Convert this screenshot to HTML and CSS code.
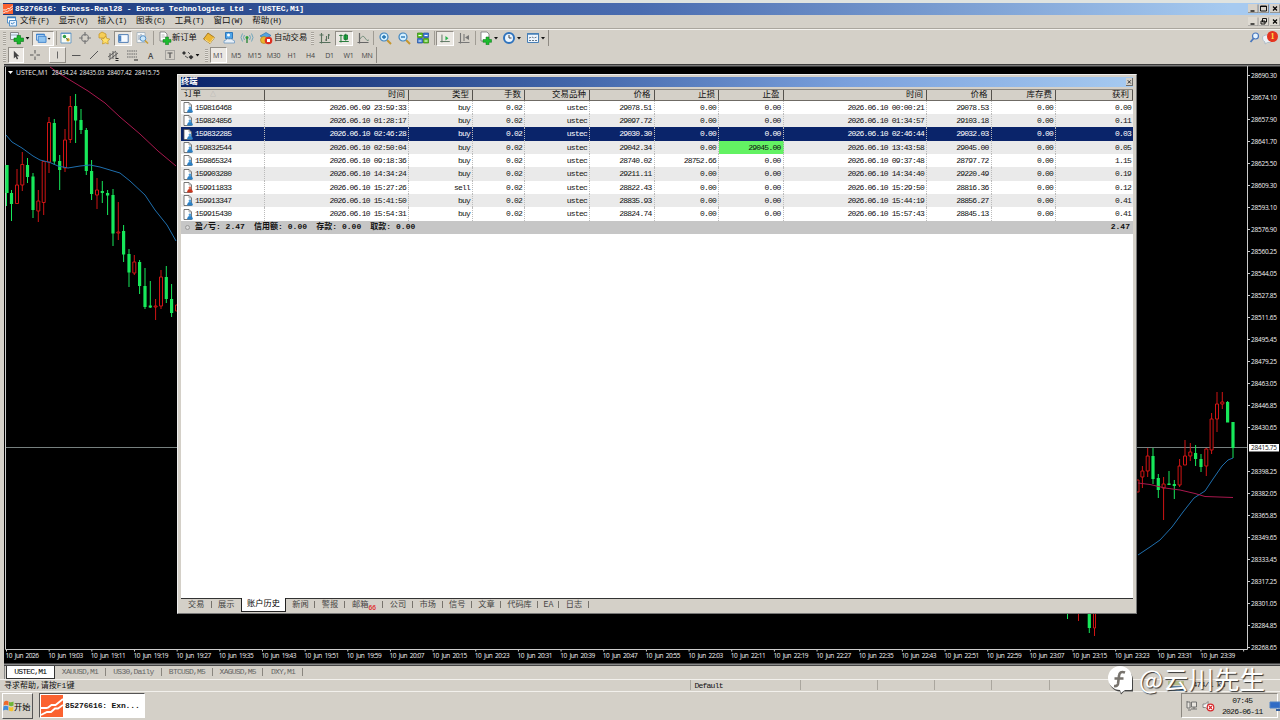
FILE: index.html
```html
<!DOCTYPE html>
<html lang="zh-CN">
<head>
<meta charset="utf-8">
<title>85276616: Exness-Real28</title>
<link rel="stylesheet" href="styles.css">
</head>
<body>
<svg class="defs" width="0" height="0">
  <defs>
    <symbol id="doc" viewBox="0 0 10 11"><path d="M1 .5h5l2.500 2.500v7.500H1z" fill="#fff" stroke="#555" stroke-width=".8"/><path d="M6 .5V3h2.500" fill="none" stroke="#777" stroke-width=".6"/></symbol>
    <symbol id="buy" viewBox="0 0 10 11"><use href="#doc"/><circle cx="7" cy="5.800" r="1.400" fill="#4b9bd8"/><path d="M4.300 10.600V9.200Q4.400 7 7 7t2.700 2.200v1.400z" fill="#2a7fc4"/></symbol>
    <symbol id="sell" viewBox="0 0 10 11"><use href="#doc"/><circle cx="7" cy="5.800" r="1.400" fill="#e0664a"/><path d="M4.300 10.600V9.200Q4.400 7 7 7t2.700 2.200v1.400z" fill="#c8341c"/></symbol>
    <symbol id="logo" viewBox="0 0 22 22"><path d="M0 0h22v22H0z" fill="#fb6230"/><path d="M0 13h5.500q1.500 0 3-1.500l2-1.500h4l7.500-6M0 20l6-3h4l4-3.500h3l5-3.500" fill="none" stroke="#fff" stroke-width="1.800"/></symbol>
    <symbol id="dd" viewBox="0 0 4 3"><path d="M0 0h4L2 2.500z" fill="#111"/></symbol>
  </defs>
</svg>
<div class="screen">
  <header class="titlebar">
    <svg width="10" height="10"><use href="#logo"/></svg>
    <span class="titletext">85276616: Exness-Real28 - Exness Technologies Ltd - [USTEC,M1]</span>
    <span class="winbtns"><svg width="32" height="9" viewBox="0 0 32 9"><path d="M0 0h10v9H0zM10.500 0h10v9h-10zM22 0h10v9H22z" fill="#d6d2ca"/><path d="M0 8.700h10V.5M10.500 8.700h10V.5M22 8.700h9.700V.5" fill="none" stroke="#555" stroke-width=".6"/><path d="M2.500 7h4" stroke="#000" stroke-width="1.300"/><path d="M12.500 2h6v5h-6zM12.500 2.500h6" fill="none" stroke="#000" stroke-width=".9"/><path d="M25 2.500l4 4m0-4l-4 4" stroke="#000" stroke-width="1.200"/></svg></span>
  </header>
  <nav class="menubar">
    <svg width="11" height="11" viewBox="0 0 11 11"><path d="M1.500 1h8v6h-8z" fill="#fff" stroke="#5591c8"/><path d="M1 1.500h9" stroke="#3a7fc0" stroke-width="1.500"/><path d="M3.500 4.500h7V10h-7z" fill="#e9f4ff" stroke="#5591c8"/><path d="M5 7l1.500 1 2-2" stroke="#3a7fc0" fill="none"/></svg>
    <span>文件<i>(F)</i></span><span>显示<i>(V)</i></span><span>插入<i>(I)</i></span><span>图表<i>(C)</i></span><span>工具<i>(T)</i></span><span>窗口<i>(W)</i></span><span>帮助<i>(H)</i></span>
    <span class="winbtns"><svg width="32" height="9" viewBox="0 0 32 9"><path d="M0 0h10v9H0zM10.500 0h10v9h-10zM22 0h10v9H22z" fill="#dedad2"/><path d="M0 8.700h10V.5M10.500 8.700h10V.5M22 8.700h9.700V.5" fill="none" stroke="#777" stroke-width=".6"/><path d="M2.500 7h4" stroke="#000" stroke-width="1.300"/><path d="M14.500 1.500h4v3.500h-4zM13 4h4v3h-4z" fill="#dedad2" stroke="#000" stroke-width=".9"/><path d="M25 2.500l4 4m0-4l-4 4" stroke="#000" stroke-width="1.200"/></svg></span>
  </nav>
  <div class="toolbar tb1">
    <b class="grip"></b>
    <svg width="21" height="14" viewBox="0 0 21 14"><path d="M1.500 1.500h8v7h-8z" fill="#e7f4ff" stroke="#888"/><path d="M2 4h7" stroke="#9ab"/><path d="M5 7h3V4.500h3.500V7h3v3.500h-3V13H8v-2.500H5z" fill="#19b52c" stroke="#08751a" stroke-width=".6"/><use href="#dd" x="16.500" y="6" width="4" height="3"/></svg>
    <svg class="pressed" width="22" height="15" viewBox="0 0 22 15"><path d="M3.500 2.500h9v7h-9z" fill="#d5ebff" stroke="#3c7fc8"/><path d="M5.500 5h9v7h-9z" fill="#8fc3f0" stroke="#3c7fc8"/><path d="M3 3h10" stroke="#3d84d0" stroke-width="1.500"/><use href="#dd" x="16" y="6.500" width="4" height="3"/></svg>
    <b class="sep"></b>
    <svg width="14" height="14" viewBox="0 0 14 14"><path d="M2 2h10v10H2z" fill="#f8fcf4" stroke="#6c9bc4"/><path d="M2 2.500h10" stroke="#69c"/><circle cx="5.500" cy="5.500" r="1.700" fill="#2ba33d"/><circle cx="9" cy="8.800" r="1.700" fill="#d5a22c"/><path d="M5 5l4 4" stroke="#486"/></svg>
    <svg width="14" height="14" viewBox="0 0 14 14"><circle cx="7" cy="7" r="3.600" fill="none" stroke="#888" stroke-width="1.200"/><path d="M7 1v4m0 4v4M1 7h4m4 0h4" stroke="#777" stroke-width="1.200"/></svg>
    <svg width="14" height="14" viewBox="0 0 14 14"><path d="M2 3l3-2 4 2v4H2z" fill="#f6ce58" stroke="#c09020" stroke-width=".7"/><path d="M8.500 5l1.300 2.500 3 .5-2 2 .4 3-2.700-1.200L5.500 13l.5-3-2-2 3-.5z" fill="#ffe06a" stroke="#c3931e" stroke-width=".7"/></svg>
    <svg class="pressed" width="18" height="15" viewBox="0 0 18 15"><path d="M4 3h11v9H4z" fill="#f6faff" stroke="#3b6eab"/><path d="M4 4h3v7H4z" fill="#4d86c6"/></svg>
    <svg width="14" height="14" viewBox="0 0 14 14"><path d="M2 1.500h8v10H2z" fill="#f4f7f9" stroke="#9aa9b6" stroke-width=".7"/><path d="M4 4v5M6 3v5" stroke="#89a"/><circle cx="8" cy="7.500" r="2.800" fill="#cbe7fa" stroke="#5591c8"/><path d="M10 9.500l3 3" stroke="#c89b35" stroke-width="1.600"/></svg>
    <b class="sep"></b>
    <span class="txtbtn"><svg width="14" height="14" viewBox="0 0 14 14"><path d="M2 1h5l2 2v7H2z" fill="#fff" stroke="#777" stroke-width=".8"/><path d="M3.500 4h3M3.500 6h4" stroke="#999" stroke-width=".7"/><path d="M5 8.500h2.500V6h3v2.500H13v2.800h-2.500v2.500h-3v-2.500H5z" fill="#1dbb2e" stroke="#08751a" stroke-width=".5"/></svg>新订单</span>
    <svg width="14" height="14" viewBox="0 0 14 14"><path d="M1.500 8L6 2l6.500 4.500L8 12.500z" fill="#ecb634" stroke="#98680c" stroke-width=".8"/><path d="M3 8.500l5 3.500 4-5.500" fill="none" stroke="#fff0b0" stroke-width=".8"/></svg>
    <svg width="14" height="14" viewBox="0 0 14 14"><path d="M3.500 1.500h7v6h-7z" fill="#4da4e8" stroke="#2d78bd"/><circle cx="6.500" cy="4" r="1.500" fill="#fff"/><path d="M2 12q-1-3 2-3 1-2 3.500-1 2-1 3 1 3 0 2 3z" fill="#e8f0f8" stroke="#6d98c0" stroke-width=".8"/></svg>
    <svg width="14" height="14" viewBox="0 0 14 14"><circle cx="7" cy="6.500" r="1.500" fill="#2a9d39"/><path d="M7 7v5" stroke="#3a8d45" stroke-width="1.500"/><path d="M4.500 9q-2-2.500 0-5m5 5q2-2.500 0-5M2.500 10.500q-3-4 0-8m9 8q3-4 0-8" fill="none" stroke="#6fa6bc" stroke-width="1"/></svg>
    <span class="txtbtn"><svg width="16" height="14" viewBox="0 0 16 14"><path d="M2 5l6-3.500 5 3L8 8z" fill="#54a4df" stroke="#236da8" stroke-width=".6"/><circle cx="6" cy="9" r="3.500" fill="#e9b630" stroke="#aa7a13" stroke-width=".6"/><circle cx="10.500" cy="9.500" r="3.800" fill="#dd2f20"/><path d="M9 8h3v3H9z" fill="#fff"/></svg>自动交易</span>
    <b class="grip g2"></b>
    <svg width="14" height="14" viewBox="0 0 14 14"><path d="M3.500 2v10.500M1.500 11.500h11M1.500 4h4M8.500 5v5M10.500 3v5M7 9h2m1-5h2" fill="none" stroke="#56705c" stroke-width="1.100"/></svg>
    <svg class="pressed" width="18" height="15" viewBox="0 0 18 15"><path d="M5.500 3v9M3.500 11h11M3.500 4h4" stroke="#2b7d3e" stroke-width="1.200"/><path d="M9 3.500h4v5H9z" fill="#23bf4a" stroke="#116d28"/><path d="M11 2v8" stroke="#116d28"/></svg>
    <svg width="14" height="14" viewBox="0 0 14 14"><path d="M3.500 2v10.500M1.500 11.500h11" stroke="#666" stroke-width="1.200"/><path d="M4 8q3-5 5-1t4 2" fill="none" stroke="#789180"/></svg>
    <b class="sep"></b>
    <svg width="14" height="14" viewBox="0 0 14 14"><path d="M9 9l4 4" stroke="#c6962d" stroke-width="2"/><circle cx="6" cy="6" r="4" fill="#d3efff" stroke="#3f83bd" stroke-width="1.200"/><path d="M4 6h4M6 4v4" stroke="#1e70b0" stroke-width="1.300"/></svg>
    <svg width="14" height="14" viewBox="0 0 14 14"><path d="M9 9l4 4" stroke="#c6962d" stroke-width="2"/><circle cx="6" cy="6" r="4" fill="#d3efff" stroke="#3f83bd" stroke-width="1.200"/><path d="M4 6h4" stroke="#1e70b0" stroke-width="1.300"/></svg>
    <svg width="14" height="14" viewBox="0 0 14 14"><path d="M1.500 2h5v4.500h-5zM7.500 7.500h5V12h-5z" fill="#59c526" stroke="#358212" stroke-width=".7"/><path d="M7.500 2h5v4.500h-5zM1.500 7.500h5V12h-5z" fill="#407ed5" stroke="#234e9c" stroke-width=".7"/><path d="M2.500 4.500h3m3 0h3m-9 5.500h3m3 0h3" stroke="#fff" stroke-width="1.200"/></svg>
    <b class="sep"></b>
    <svg class="pressed" width="18" height="15" viewBox="0 0 18 15"><path d="M5.500 3v9M3.500 11h11" stroke="#5a7560" stroke-width="1.100"/><path d="M9.500 4.500l3.500 2.700-3.500 2.700z" fill="#28b34c"/></svg>
    <svg width="14" height="14" viewBox="0 0 14 14"><path d="M3.500 2v10.500M1.500 11.500h11M7 3v7" stroke="#777" stroke-width="1.100"/><path d="M8 6.500L12 4v5z" fill="#777"/></svg>
    <b class="sep"></b>
    <svg width="21" height="14" viewBox="0 0 21 14"><path d="M3 1h6l2 2v7H3z" fill="#fff" stroke="#777" stroke-width=".8"/><path d="M5 8.500h3V6h3v2.500h2.500v2.800H11v2.500H8v-2.500H5z" fill="#1dbb2e" stroke="#08751a" stroke-width=".5"/><use href="#dd" x="16" y="6" width="4" height="3"/></svg>
    <svg width="21" height="14" viewBox="0 0 21 14"><circle cx="8" cy="7" r="5" fill="#eaf5ff" stroke="#2f73bd" stroke-width="2"/><path d="M8 4v3h2.500" fill="none" stroke="#444"/><use href="#dd" x="16" y="6" width="4" height="3"/></svg>
    <svg width="21" height="14" viewBox="0 0 21 14"><path d="M2.500 2.500h11v9h-11z" fill="#eef6ff" stroke="#477fb6"/><path d="M2 3h12" stroke="#477fb6" stroke-width="1.500"/><path d="M4 7l3-1 2 1 3-1M4 9.500h8" fill="none" stroke="#678" stroke-dasharray="2 1"/><use href="#dd" x="16" y="6" width="4" height="3"/></svg>
    <i class="edge"></i>
    <svg width="12" height="14" viewBox="0 0 12 14"><circle cx="6.500" cy="5" r="3" fill="#e5f3ff" stroke="#4977bd" stroke-width="1.200"/><path d="M4.500 7.500L1.500 11" stroke="#4977bd" stroke-width="1.800"/></svg>
    <svg width="18" height="16" viewBox="0 0 18 16"><path d="M.5 8q0-3 5-3t5 4-5 3.500L3 14V12Q.5 11 .5 8z" fill="#eef2f6" stroke="#a6b5c2" stroke-width=".8"/><circle cx="10.500" cy="6.500" r="5.500" fill="#e43420"/><text x="8.600" y="9.300" class="badge">1</text></svg>
  </div>
  <div class="toolbar tb2">
    <b class="grip"></b>
    <svg class="pressed" width="16" height="16" viewBox="0 0 16 16"><path d="M5.500 3v9l2-2 1.500 3 1.500-.7-1.400-3h2.700z" fill="#444"/></svg>
    <svg width="14" height="14" viewBox="0 0 14 14"><path d="M7 2v3.500M7 8.500V12M2 7h3.500M8.500 7H12" stroke="#555"/></svg>
    <b></b>
    <svg class="pressed raised" width="17" height="16" viewBox="0 0 17 16"><path d="M8.500 4v8" stroke="#555"/></svg>
    <svg width="14" height="14" viewBox="0 0 14 14"><path d="M3 7.500h8.500" stroke="#555"/></svg>
    <svg width="14" height="14" viewBox="0 0 14 14"><path d="M3 11l8-8" stroke="#555"/></svg>
    <svg width="14" height="14" viewBox="0 0 14 14"><path d="M2 9l8-6M3 12l9-7M4 5v6M7 3v8M10 4v6" stroke="#555" stroke-width=".9"/><path d="M9.500 10.500h3M9.500 12.500h3" stroke="#222"/></svg>
    <svg width="14" height="14" viewBox="0 0 14 14"><path d="M2 3h10M2 6h10M2 9h10" stroke="#666" stroke-dasharray="1.500 .7"/><path d="M9 12h4" stroke="#222"/></svg>
    <span class="lat big">A</span>
    <svg width="14" height="14" viewBox="0 0 14 14"><path d="M2.500 2.500h9v9h-9z" fill="none" stroke="#777" stroke-dasharray="1 1"/><path d="M4.500 5h5M7 5v5" stroke="#555" stroke-width="1.200"/></svg>
    <svg width="22" height="14" viewBox="0 0 22 14"><path d="M4 3l2 2-2 2-2-2zM11 7l2.500 2-2.500 2.500L8.500 9z" fill="#333"/><path d="M5 8l3 2M8 4l2 2" stroke="#555"/><use href="#dd" x="15.500" y="6" width="4" height="3"/></svg>
    <b class="grip"></b>
    <span class="lat pressed">M1</span><span class="lat">M5</span><span class="lat">M15</span><span class="lat">M30</span><span class="lat">H1</span><span class="lat">H4</span><span class="lat">D1</span><span class="lat">W1</span><span class="lat">MN</span><i class="edge"></i>
  </div>

  <main class="chart">
    <svg class="plot" width="1280" height="602" viewBox="0 64 1280 602">
      <path d="M4 64h1276v602H4z" fill="#000"/>
      <path d="M4 65.500h1276" stroke="#777" stroke-width="2"/>
      <path d="M5.500 67V649.500H1247.500V66" fill="none" stroke="#ccc"/>
      <path d="M4 664.500h1276" stroke="#888" stroke-width="2"/>
      <path d="M6 447.500h1241" stroke="#77807f"/>
      <path d="M8 71h5l-2.500 3z" fill="#fff"/>
      <g fill="none" stroke="#17e85a" stroke-width="1">
        <path d="M6.500 165v41M11.500 190v31M27.500 158v25M33 173v45M54.300 119v46M59.700 155v35M75.600 94v49M81 109v25M86.300 128v47M91.600 160v40M102.300 181v22M107.600 190v25M113 189v57M123.600 225v37M129 249v38M139.600 260v34M145 268v41M150.300 281v27M166.300 266v37M171.600 284v33"/>
        <path d="M1153 448v36M1158.300 474v24M1169 471v14M1174.300 480v19M1195.600 445v21M1201 454v18M1227.600 401v21M1233 422v36M1067.500 613v6M1089.300 613v20"/>
        <path stroke-width="3.200" d="M7 165v28M11.500 193v11M27.500 165v12M33 176.500v33.500M54.300 123v38.500M59.700 161v9M75.600 106v14.500M81 120v10M86.300 130v41M91.600 171v23M102.300 191v2M107.600 193v2.500M113 195v38.500M123.600 231v23.500M129 254v18.500M139.600 262v24M145 286v21M150.300 305.500v2M166.300 277v22M171.600 299v14M1153 456v23M1158.300 478v12M1169 483.500v1.500M1174.300 484v2M1195.600 453v6M1201 459v8M1227.600 402v20.500M1233 422v26M1089.300 613v15"/>
      </g>
      <g fill="#000" stroke="#d01414" stroke-width="1">
        <path d="M17 169v35M22.300 152v39M38.300 190v32M43.700 161v54M49 117v56M65 129v43M70.300 96v47M97 178v31M118.300 202v38M134.300 255v20M155.600 299v21M161 270v39M1142.400 466v22M1147.700 448v29M1163.600 477v43M1179.600 459v28M1185 440v25M1190.300 443v18M1206.300 448v28M1211.600 413v41M1217 392v40M1222.300 392v17M1078.500 613v8M1094.500 613v23"/>
        <path d="M15.500 185h3v18.500h-3zM20.800 164.500h3V185h-3zM36.800 201h3v10h-3zM42.200 161.500h3v41h-3zM47.500 122.500h3V162h-3zM63.500 140h3v28h-3zM68.800 106.500h3v33h-3zM95.500 190h3v5h-3zM116.800 232h3v1h-3zM132.800 262h3v11h-3zM154.100 306h3v1h-3zM159.500 277h3v29h-3zM175.500 305h3v6h-3zM1136 480h3v12h-3zM1140.900 471h3v6h-3zM1146.200 456h3v15h-3zM1162.100 484h3v4h-3zM1178.100 466h3v19h-3zM1183.500 456h3v9h-3zM1188.800 452h3v4h-3zM1204.800 449h3v17h-3zM1210.100 419h3v31h-3zM1215.500 404h3v15h-3zM1220.800 402h3v2h-3zM1093.500 610h2v18h-2z"/>
      </g>
      <path d="M6 135l6 7 10 6 11 8 7 4 10 2.500 8 3.500 10 2 12-2 10-1 10 2 20 6 10 8 15 14 10 15 12 15 9 16M1138 555l12-8 10-7 12-13 11-15 11-14 11-7 8-12 9-13 6-6 5-2" fill="none" stroke="#1f6fae"/>
      <path d="M50 67l10 7 28 17 17 12 15 14 20 17 18 17 18 15M1138 483l12 1.500 15 3.500 15 2 15 3.500 10 3 28 1" fill="none" stroke="#a8184e"/>
      <text x="16" y="75" textLength="32" lengthAdjust="spacingAndGlyphs" class="ax">USTEC,M1</text>
      <text x="52" y="75" textLength="107.500" lengthAdjust="spacingAndGlyphs" class="ax">28434.24 28435.03 28407.42 28415.75</text>
      <path stroke="#ccc" d="M1248 75.500h2M1248 97.500h2M1248 119.500h2M1248 141.500h2M1248 163.500h2M1248 185.500h2M1248 207.500h2M1248 229.500h2M1248 251.500h2M1248 273.500h2M1248 295.500h2M1248 317.500h2M1248 339.500h2M1248 361.500h2M1248 383.500h2M1248 405.500h2M1248 427.500h2M1248 471.500h2M1248 493.500h2M1248 515.500h2M1248 537.500h2M1248 559.500h2M1248 581.500h2M1248 603.500h2M1248 625.500h2M1248 647.500h2"/>
      <path d="M6 650.500h1241" stroke="#ccc" stroke-width="2" stroke-dasharray="1 41.660"/>
      <g class="ax">
        <text x="1251" y="78" textLength="26">28690.30</text><text x="1251" y="100" textLength="26">28674.10</text><text x="1251" y="122" textLength="26">28657.90</text><text x="1251" y="144" textLength="26">28641.70</text><text x="1251" y="166" textLength="26">28625.50</text><text x="1251" y="188" textLength="26">28609.30</text><text x="1251" y="210" textLength="26">28593.10</text><text x="1251" y="232" textLength="26">28576.90</text><text x="1251" y="254" textLength="26">28560.25</text><text x="1251" y="276" textLength="26">28544.05</text><text x="1251" y="298" textLength="26">28527.85</text><text x="1251" y="320" textLength="26">28511.65</text><text x="1251" y="342" textLength="26">28495.45</text><text x="1251" y="364" textLength="26">28479.25</text><text x="1251" y="386" textLength="26">28463.05</text><text x="1251" y="408" textLength="26">28446.85</text><text x="1251" y="430" textLength="26">28430.65</text>
        <path d="M1249 444h30v7.500h-30z" fill="#fff"/><text x="1251" y="450" textLength="26" class="now">28415.75</text>
        <text x="1251" y="474" textLength="26">28398.25</text><text x="1251" y="496" textLength="26">28382.05</text><text x="1251" y="518" textLength="26">28365.85</text><text x="1251" y="540" textLength="26">28349.65</text><text x="1251" y="562" textLength="26">28333.45</text><text x="1251" y="584" textLength="26">28317.25</text><text x="1251" y="606" textLength="26">28301.05</text><text x="1251" y="628" textLength="26">28284.85</text><text x="1251" y="650" textLength="26">28268.65</text>
        <text x="5.500" y="658" textLength="33.500">10 Jun 2026</text><text x="48.200" y="658" textLength="35">10 Jun 19:03</text><text x="90.800" y="658" textLength="35">10 Jun 19:11</text><text x="133.500" y="658" textLength="35">10 Jun 19:19</text><text x="176.200" y="658" textLength="35">10 Jun 19:27</text><text x="218.800" y="658" textLength="35">10 Jun 19:35</text><text x="261.500" y="658" textLength="35">10 Jun 19:43</text><text x="304.200" y="658" textLength="35">10 Jun 19:51</text><text x="346.800" y="658" textLength="35">10 Jun 19:59</text><text x="389.500" y="658" textLength="35">10 Jun 20:07</text><text x="432.200" y="658" textLength="35">10 Jun 20:15</text><text x="474.800" y="658" textLength="35">10 Jun 20:23</text><text x="517.500" y="658" textLength="35">10 Jun 20:31</text><text x="560.200" y="658" textLength="35">10 Jun 20:39</text><text x="602.800" y="658" textLength="35">10 Jun 20:47</text><text x="645.500" y="658" textLength="35">10 Jun 20:55</text><text x="688.200" y="658" textLength="35">10 Jun 22:03</text><text x="730.800" y="658" textLength="35">10 Jun 22:11</text><text x="773.500" y="658" textLength="35">10 Jun 22:19</text><text x="816.200" y="658" textLength="35">10 Jun 22:27</text><text x="858.800" y="658" textLength="35">10 Jun 22:35</text><text x="901.500" y="658" textLength="35">10 Jun 22:43</text><text x="944.200" y="658" textLength="35">10 Jun 22:51</text><text x="986.800" y="658" textLength="35">10 Jun 22:59</text><text x="1029.500" y="658" textLength="35">10 Jun 23:07</text><text x="1072.200" y="658" textLength="35">10 Jun 23:15</text><text x="1114.800" y="658" textLength="35">10 Jun 23:23</text><text x="1157.500" y="658" textLength="35">10 Jun 23:31</text><text x="1200.200" y="658" textLength="35">10 Jun 23:39</text>
      </g>
    </svg>

    <section class="terminal">
      <div class="ttitle"><span>终端</span><svg width="7" height="8" viewBox="0 0 7 8"><path d="M0 0h7v8H0z" fill="#d4d0c8"/><path d="M0 7.600h6.600V0" fill="none" stroke="#444" stroke-width=".8"/><path d="M1.800 2.300l3 3.200m0-3.200l-3 3.200" stroke="#222" stroke-width=".9"/></svg></div>
      <div class="row head"><span>订单 <em>△</em></span><span>时间</span><span>类型</span><span>手数</span><span>交易品种</span><span>价格</span><span>止损</span><span>止盈</span><span>时间</span><span>价格</span><span>库存费</span><span>获利</span></div>
      <div class="row"><span><svg><use href="#buy"/></svg>159816468</span><span>2026.06.09 23:59:33</span><span>buy</span><span>0.02</span><span>ustec</span><span>29078.51</span><span>0.00</span><span>0.00</span><span>2026.06.10 00:00:21</span><span>29078.53</span><span>0.00</span><span>0.00</span></div>
      <div class="row alt"><span><svg><use href="#buy"/></svg>159824856</span><span>2026.06.10 01:28:17</span><span>buy</span><span>0.02</span><span>ustec</span><span>29097.72</span><span>0.00</span><span>0.00</span><span>2026.06.10 01:34:57</span><span>29103.18</span><span>0.00</span><span>0.11</span></div>
      <div class="row sel"><span><svg><use href="#buy"/></svg>159832285</span><span>2026.06.10 02:46:28</span><span>buy</span><span>0.02</span><span>ustec</span><span>29030.30</span><span>0.00</span><span>0.00</span><span>2026.06.10 02:46:44</span><span>29032.03</span><span>0.00</span><span>0.03</span></div>
      <div class="row alt"><span><svg><use href="#buy"/></svg>159832544</span><span>2026.06.10 02:50:04</span><span>buy</span><span>0.02</span><span>ustec</span><span>29042.34</span><span>0.00</span><span class="hit">29045.00</span><span>2026.06.10 13:43:58</span><span>29045.00</span><span>0.00</span><span>0.05</span></div>
      <div class="row"><span><svg><use href="#buy"/></svg>159865324</span><span>2026.06.10 09:18:36</span><span>buy</span><span>0.02</span><span>ustec</span><span>28740.02</span><span>28752.66</span><span>0.00</span><span>2026.06.10 09:37:48</span><span>28797.72</span><span>0.00</span><span>1.15</span></div>
      <div class="row alt"><span><svg><use href="#buy"/></svg>159903280</span><span>2026.06.10 14:34:24</span><span>buy</span><span>0.02</span><span>ustec</span><span>29211.11</span><span>0.00</span><span>0.00</span><span>2026.06.10 14:34:40</span><span>29220.49</span><span>0.00</span><span>0.19</span></div>
      <div class="row"><span><svg><use href="#sell"/></svg>159911833</span><span>2026.06.10 15:27:26</span><span>sell</span><span>0.02</span><span>ustec</span><span>28822.43</span><span>0.00</span><span>0.00</span><span>2026.06.10 15:29:50</span><span>28816.36</span><span>0.00</span><span>0.12</span></div>
      <div class="row alt"><span><svg><use href="#buy"/></svg>159913347</span><span>2026.06.10 15:41:50</span><span>buy</span><span>0.02</span><span>ustec</span><span>28835.93</span><span>0.00</span><span>0.00</span><span>2026.06.10 15:44:19</span><span>28856.27</span><span>0.00</span><span>0.41</span></div>
      <div class="row"><span><svg><use href="#buy"/></svg>159915430</span><span>2026.06.10 15:54:31</span><span>buy</span><span>0.02</span><span>ustec</span><span>28824.74</span><span>0.00</span><span>0.00</span><span>2026.06.10 15:57:43</span><span>28845.13</span><span>0.00</span><span>0.41</span></div>
      <div class="sum"><i class="dot"></i><span>盈/亏: 2.47</span><span>信用额: 0.00</span><span>存款: 0.00</span><span>取款: 0.00</span><span class="total">2.47</span></div>
      <div class="blank"></div>
      <div class="ttabs"><span>交易</span><span class="nosep">展示</span><span class="on">账户历史</span><span>新闻</span><span>警报</span><span>邮箱<sub>66</sub></span><span>公司</span><span>市场</span><span>信号</span><span>文章</span><span>代码库</span><span>EA</span><span>日志</span></div>
    </section>
  </main>

  <div class="ctabs"><b></b><span class="on">USTEC,M1</span><span>XAUUSD,M1</span><span>US30,Daily</span><span>BTCUSD,M5</span><span>XAGUSD,M5</span><span>DXY,M1</span></div>
  <div class="status"><span>寻求帮助,请按F1键</span><span class="lt">Default</span><span></span><span></span><span></span><span></span><span class="net"><svg width="17" height="11" viewBox="0 0 17 11"><path d="M1 1v4m2-4v4m2-4v4m2-4v4m2-4v4m2-4v4m2-4v4m2-4v4" stroke="#8da84c"/><path d="M1 6v5m2-5v5m2-5v5m2-5v5m2-5v5m2-5v5m2-5v5m2-5v5" stroke="#285e91" stroke-width="1.400"/></svg> 474/1 kb</span></div>
  <footer class="taskbar">
    <button class="start"><svg width="11" height="12" viewBox="0 0 11 12"><path d="M1 2q2-2 4.500-.5v4Q3 4 .5 5.500z" fill="#ef6a2b"/><path d="M6 1.800Q8 3 10.500 1.500v4Q8 7 6 5.500z" fill="#6fb537"/><path d="M.5 6.200Q3 5 5.300 6.500v4Q3 9 0 10.500z" fill="#3f8bdc"/><path d="M5.800 6.800q2.200 1.200 4.500 0v4q-2.300 1.200-4.500-.3z" fill="#f3c22e"/></svg>开始</button>
    <div class="task"><svg width="22" height="22"><use href="#logo"/></svg>85276616: Exn...</div>
    <div class="tray">
      <svg width="12" height="12" viewBox="0 0 12 12"><path d="M1 1v7h3V2H1M2 10h3M5.500 2h5v5h-5zM5 9h6M8 7v2" fill="#e8e5df" stroke="#666" stroke-width=".9"/></svg>
      <svg width="13" height="12" viewBox="0 0 13 12"><path d="M1 4h2.500L6 1.500v8L3.500 7.500H1z" fill="#f5f5f5" stroke="#777" stroke-width=".8"/><circle cx="8.500" cy="7.500" r="3.300" fill="#fff" stroke="#d7262a" stroke-width="1.200"/><path d="M7 6l3 3m0-3L7 9" stroke="#d7262a" stroke-width="1.200"/></svg>
      <div class="clock"><span>07:45</span><span>2026-06-11</span></div>
      <svg width="12" height="10" viewBox="0 0 12 10"><path d="M1 1h10v6H1z" fill="#2f6bc5" stroke="#4e82c6"/><path d="M7 8h4v2H7z" fill="#345f9e"/></svg>
    </div>
  </footer>
  <div class="mark"><svg width="28" height="30" viewBox="0 0 28 30"><path d="M14 2.500A12 12 0 0 1 26 14.500v11H17l-3 3-1-3A11.500 11.500 0 0 1 14 2.500z" fill="#444" transform="translate(1 1)"/><path d="M14 1A12 12 0 0 1 26 13v11q0 1-1 1h-6l-4 3-1-3A12 12 0 0 1 14 1z" fill="#fff"/><path d="M19 7.500q-5.500-2-6 3.500l-1 8q-.5 2.500-4 2M8.500 13.500h9" fill="none" stroke="#77736d" stroke-width="2.600"/></svg><span>@云川先生</span></div>
</div>
</body>
</html>
```
FILE: styles.css
```css
* { box-sizing: border-box; }
body { margin: 0; overflow: hidden; background: #d4d0c8; font: 8px/1 "Liberation Mono", "Noto Sans CJK SC", monospace; color: #111; }
.defs { position: absolute; }
svg { display: block; flex: none; }
i { font-style: normal; }
.screen { position: relative; width: 1280px; height: 720px; display: flex; flex-direction: column; background: #d4d0c8; border-top: 3px solid #dfe3e0; overflow: hidden; }

.titlebar { height: 11.500px; margin-left: 3px; display: flex; align-items: center; gap: 2px; background: linear-gradient(90deg, #1b3a7e, #4a6cb0 50%, #a6caf0 96%); color: #fff; flex: none; }
.titletext { font-weight: bold; letter-spacing: -.14px; white-space: pre; }
.winbtns { margin-left: auto; }

.menubar { height: 14px; display: flex; align-items: center; padding-left: 6px; flex: none; border-bottom: 1px solid #aaa69e; }
.menubar > span:not(.winbtns) { width: 38.700px; white-space: nowrap; font-size: 8.500px; }
.menubar > svg { margin-right: 3px; }
.menubar i { letter-spacing: -.8px; font-size: 8px; padding-left: 0; }

.toolbar { display: grid; align-items: center; justify-items: center; flex: none; }
.tb1 { height: 18px; grid-template-columns: 8px 23px 24px 2px 18px 20px 18px 19px 19px 5px 42px 21px 19px 18px 52px 8px 18px 19px 19px 3px 19px 19px 19px 4px 18px 19px 4px 23px 23px 25px 1fr 14px 18px; border-top: 1px solid #f4f2ee; }
.tb2 { height: 17.500px; grid-template-columns: 8px 16px 22px 3px 17px 19px 18px 19px 19px 19px 19px 24px 6px 18px 18px 19px 19px 18px 19px 19px 19px 18px 1fr; }
.grip { width: 3px; height: 13px; background: repeating-linear-gradient(#a7a39b 0 1px, #e5e2dc 1px 2px); }
.sep { width: 1px; height: 14px; background: #a09c94; }
.edge { justify-self: start; width: 1px; height: 16px; background: #8f8b84; }
.pressed { background: #ebe8e3; border: 1px solid; border-color: #918d86 #fff #fff #918d86; }
.raised { background: #dfdbd4; border-color: #fff #918d86 #918d86 #fff; }
.txtbtn { display: flex; align-items: center; justify-self: start; white-space: nowrap; font-size: 8.300px; margin-left: 2px; }
.badge { font: bold 8px "Liberation Serif", serif; fill: #ffe14a; }
.lat { font: 7px/15px "Open Sans", sans-serif; color: #444; letter-spacing: -.2px; }
.lat.big { font-weight: 600; font-size: 8px; }
.lat.pressed { width: 17px; height: 16px; text-align: center; }

.chart { position: relative; height: 602px; flex: none; }
.ax { font: 6.500px "Open Sans", "Noto Sans", sans-serif; word-spacing: 1.500px; fill: #f4f4f4; }
.now { fill: #111; }

.terminal { position: absolute; left: 177px; top: 10px; width: 960px; height: 539.500px; padding: 2px 3px 2px 3px; background: #d4d0c8; border: 1px solid; border-color: #eee #777 #777 #eee; display: flex; flex-direction: column; }
.ttitle { height: 10px; display: flex; align-items: center; justify-content: space-between; background: linear-gradient(90deg, #0a246a, #4468ab 42%, #7aa0dc 70%, #a6caf0); color: #fff; font-weight: bold; font-size: 8.300px; flex: none; margin-bottom: 1.500px; }
.row { display: grid; grid-template-columns: 84px 144px 64px 52px 65px 64.500px 64.500px 64.500px 143.500px 64.500px 64.500px 1fr; height: 13.330px; line-height: 13.300px; background: #fff; text-align: right; letter-spacing: -.77px; flex: none; }
.row > span { padding-right: 2px; border-right: 1px dotted #bbb; white-space: pre; overflow: hidden; }
.row > span:last-child { border-right: 0; }
.row > span:first-child { text-align: left; display: flex; align-items: center; gap: 2px; padding-left: 2px; }
.row svg { width: 10px; height: 11px; }
.alt { background: #eaeaea; }
.sel { background: #0a246a; color: #fff; }
.row > .hit { background: #63f263; }
.head { height: 12.300px; line-height: 11px; background: #d4d0c8; letter-spacing: 0; font-size: 8.500px; border-top: 1px solid #8b8780; border-bottom: 1px solid #6f6b65; }
.head > span, .head > span:last-child { border-right: 1px solid #55524d; padding-right: 3px; }
.head > span:first-child { padding-left: 3px; }
.head em { font-style: normal; color: #aaa; font-size: 6px; padding-left: 2px; }
.sum { height: 13.330px; display: flex; align-items: center; gap: 9px; background: #c6c6c6; font-weight: bold; letter-spacing: .04px; white-space: pre; padding: 0 3px 0 4px; flex: none; }
.dot { width: 5px; height: 5px; border: 1px solid #999; border-radius: 50%; background: #d8d8d8; margin-right: -4px; }
.total { margin-left: auto; }
.blank { flex: 1; background: #fff; border-bottom: 1px solid #333; }
.ttabs { height: 11.500px; display: grid; grid-template-columns: 30.500px 29.500px 45px 29px 30px 38px 30px 29.500px 29.500px 29px 37px 21px 30px; line-height: 11px; text-align: center; color: #444; font-size: 8.200px; flex: none; white-space: nowrap; }
.ttabs span { background: linear-gradient(#77736c, #77736c) right 2px / 1px 7px no-repeat; }
.ttabs .nosep { background: none; }
.ttabs .on { background: #fff; color: #000; border: 1px solid #222; border-top: 0; margin-top: -1px; }
.ttabs sub { color: #e02020; font: 600 6.500px/1 "Open Sans", sans-serif; vertical-align: -3px; }

.ctabs { height: 12.500px; margin-left: 4px; display: grid; grid-template-columns: 2px 47.500px 51px 56px 51px 50.500px 40px; text-align: center; line-height: 11px; letter-spacing: -.77px; color: #666; flex: none; border-left: 1px solid #888; }
.ctabs b { border-right: 1px solid #333; }
.ctabs span { background: linear-gradient(#8a867f, #8a867f) right 2px / 1px 8px no-repeat; }
.ctabs .on { background: #fff; color: #000; border-right: 1px solid #333; border-bottom: 1px solid #333; }
.status { height: 13.500px; display: grid; grid-template-columns: 690.500px 110px 77.500px 56.500px 57.500px 57.500px 1fr; align-items: center; border-top: 1px solid #f2f0ec; border-bottom: 1px solid #f2f0ec; flex: none; font-size: 8px; }
.status span { height: 10px; line-height: 12px; padding-left: 4px; border-right: 1px solid #aaa69e; }
.status span:last-child { border: 0; }
.status .lt { letter-spacing: -.77px; }
.status .net { display: flex; align-items: center; padding-left: 118px; gap: 4px; letter-spacing: -.77px; white-space: pre; }
.taskbar { flex: 1; display: flex; align-items: stretch; padding: 1px 2px; }
.start { width: 31px; height: 26px; padding: 0; display: flex; align-items: center; font: 8.200px "Noto Sans CJK SC", sans-serif; color: #000; background: #d4d0c8; border: 1px solid; border-color: #fff #555 #555 #fff; }
.task { width: 106px; height: 25px; margin-left: 6px; display: flex; align-items: center; gap: 2px; background: #fff; border: 1px solid; border-color: #555 #fff #fff #555; font-weight: bold; letter-spacing: -.14px; white-space: nowrap; padding-left: 1px; }
.tray { margin-left: auto; width: 97px; height: 25px; display: flex; align-items: center; gap: 4px; padding-left: 4px; border: 1px solid; border-color: #8b8780 #fff #fff #8b8780; }
.clock { width: 42px; margin: 2px 2px 0 3px; display: flex; flex-direction: column; align-items: center; gap: 2.500px; letter-spacing: -.75px; white-space: nowrap; }
.mark { position: absolute; left: 1106px; top: 662px; display: flex; align-items: center; gap: 5px; color: #fff; font: 25.500px/30px "Noto Sans CJK SC", sans-serif; letter-spacing: 0; text-shadow: 1px 1px 1px #333; white-space: nowrap; }
.mark span { margin-top: -5px; }
```
